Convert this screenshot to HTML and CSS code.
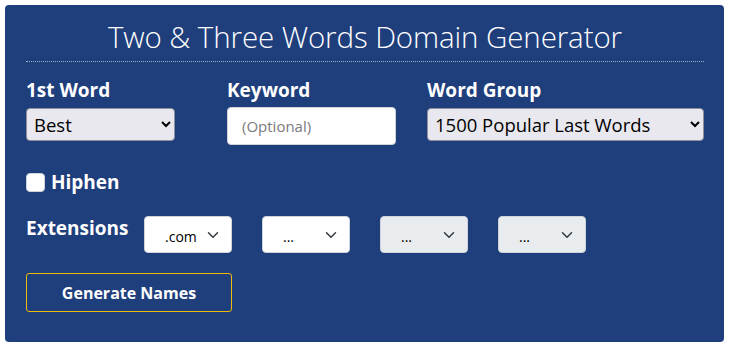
FILE: index.html
```html
<!DOCTYPE html>
<html lang="en">
<head>
    <meta charset="UTF-8">
    <meta name="viewport" content="width=device-width, initial-scale=1.0">
    <title>Two &amp; Three Words Domain Generator</title>
    <link rel="stylesheet" href="styles.css">
</head>
<body>
    <div class="panel">
        <h1 class="title">Two &amp; Three Words Domain Generator</h1>

        <form class="generator">
            <div class="fields">
                <div class="field">
                    <label for="first">1st Word</label>
                    <select id="first" class="select small">
                        <option>Best</option>
                    </select>
                </div>
                <div class="field">
                    <label for="keyword">Keyword</label>
                    <input type="text" id="keyword" placeholder="(Optional)">
                </div>
                <div class="field">
                    <label for="group">Word Group</label>
                    <select id="group" class="select wide">
                        <option>1500 Popular Last Words</option>
                    </select>
                </div>
            </div>

            <label class="check">
                <input type="checkbox">
                <span>Hiphen</span>
            </label>

            <div class="extensions">
                <span class="ext-label">Extensions</span>
                <select class="ext"><option>.com</option></select>
                <select class="ext"><option>...</option></select>
                <select class="ext" disabled><option>...</option></select>
                <select class="ext" disabled><option>...</option></select>
            </div>

            <button type="submit" class="generate">Generate Names</button>
        </form>
    </div>
</body>
</html>
```

FILE: styles.css
```css
* {
    margin: 0;
    padding: 0;
    box-sizing: border-box;
}

body {
    font-family: 'Open Sans', 'Noto Sans', sans-serif;
    background: #fff;
    padding: 5px;
}

.panel {
    width: 719px;
    height: 337px;
    background: #1f3e7c;
    border-radius: 4px;
    padding: 13px 20px 0 21px;
    color: #fff;
}

.title {
    font-weight: 300;
    font-size: 29.5px;
    text-align: center;
    line-height: 38px;
    padding-bottom: 5px;
    border-bottom: 1px dotted rgba(255, 255, 255, 0.6);
    letter-spacing: -0.1px;
}

.fields {
    display: grid;
    grid-template-columns: 201px 200px 1fr;
    margin-top: 16px;
}

.field label {
    display: block;
    font-weight: 700;
    font-size: 19px;
    line-height: 24px;
    margin-bottom: 6px;
}

.select {
    height: 33px;
    background: #e9e8ee;
    border: 1px solid #8f8f9d;
    border-radius: 4px;
    font-family: inherit;
    font-size: 18.5px;
    color: #000;
    padding: 0 3px;
}

.select.small {
    width: 149px;
}

.select.wide {
    width: 100%;
}

.field input {
    width: 169px;
    height: 38px;
    margin-top: -1px;
    border: 1px solid #ced4da;
    border-radius: 4px;
    background: #fff;
    padding: 0 14px;
    font-family: inherit;
    font-size: 15px;
}

.field input::placeholder {
    color: #7a7a7a;
}

.check {
    display: flex;
    align-items: center;
    gap: 6px;
    margin-top: 24px;
    font-weight: 700;
    font-size: 19px;
}

.check input {
    appearance: none;
    width: 19px;
    height: 19px;
    background: #fff;
    border: 1px solid #ced4da;
    border-radius: 4px;
}

.extensions {
    display: flex;
    align-items: flex-start;
    margin-top: 21px;
}

.ext-label {
    width: 118px;
    font-weight: 700;
    font-size: 19px;
    line-height: 24px;
}

.ext {
    appearance: none;
    width: 88px;
    height: 37px;
    margin-right: 30px;
    border: 1px solid #ced4da;
    border-radius: 4px;
    background: #fff url("data:image/svg+xml,%3Csvg xmlns='http://www.w3.org/2000/svg' viewBox='0 0 16 16'%3E%3Cpath fill='none' stroke='%23343a40' stroke-linecap='round' stroke-linejoin='round' stroke-width='2' d='M2 5l6 6 6-6'/%3E%3C/svg%3E") no-repeat right 10px center / 16px 12px;
    font-family: inherit;
    font-size: 14px;
    color: #000;
    padding: 4px 0 0 20px;
    opacity: 1;
}

.ext:disabled {
    background-color: #e9ecef;
    color: #000;
    opacity: 1;
}

.generate {
    display: block;
    width: 206px;
    height: 39px;
    margin-top: 20px;
    background: transparent;
    border: 1px solid #f0b90b;
    border-radius: 3px;
    color: #fff;
    font-family: inherit;
    font-weight: 700;
    font-size: 16px;
    cursor: pointer;
}
```
